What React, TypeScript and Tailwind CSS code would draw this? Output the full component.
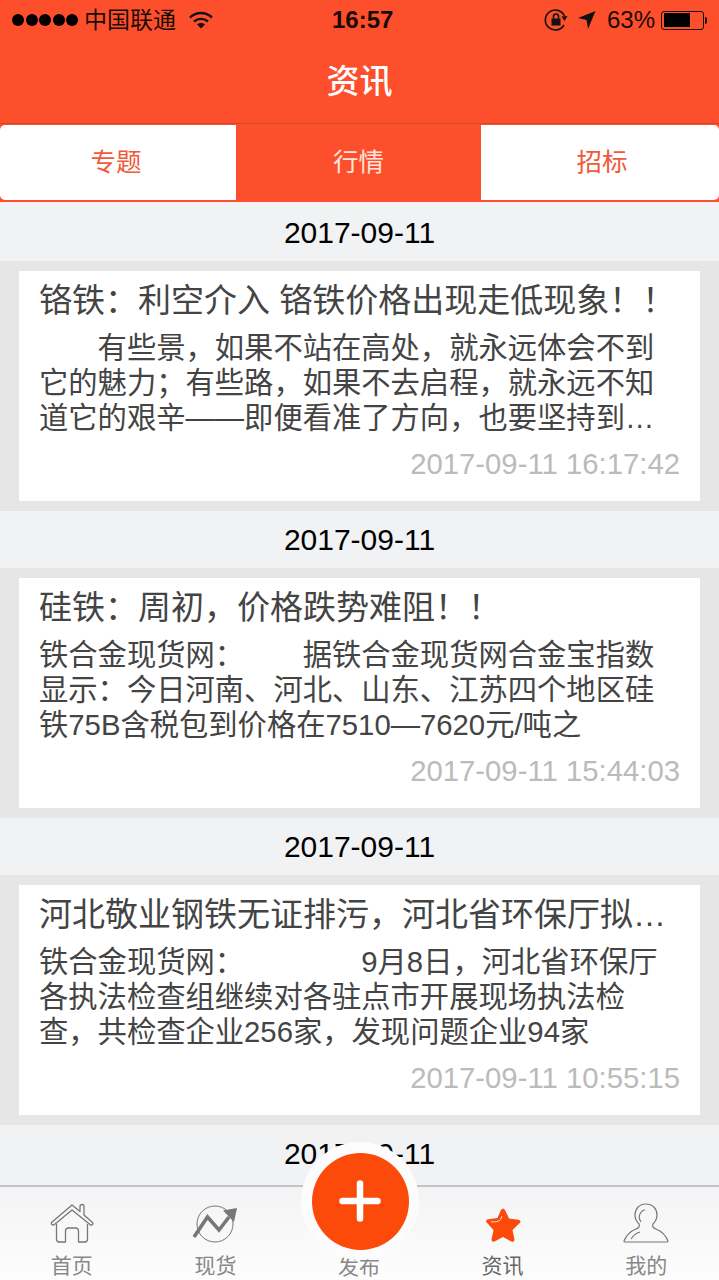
import React from 'react';
import { Plus } from 'lucide-react';

const articles = [
  {
    title: '铬铁：利空介入 铬铁价格出现走低现象！！',
    lines: ['\u2003\u2003有些景，如果不站在高处，就永远体会不到', '它的魅力；有些路，如果不去启程，就永远不知', '道它的艰辛——即便看准了方向，也要坚持到…'],
    time: '2017-09-11 16:17:42',
  },
  {
    title: '硅铁：周初，价格跌势难阻！！',
    lines: ['铁合金现货网：\u2003\u2003据铁合金现货网合金宝指数', '显示：今日河南、河北、山东、江苏四个地区硅', '铁75B含税包到价格在7510—7620元/吨之'],
    time: '2017-09-11 15:44:03',
  },
  {
    title: '河北敬业钢铁无证排污，河北省环保厅拟…',
    lines: ['铁合金现货网：\u2003\u2003\u2003\u20039月8日，河北省环保厅', '各执法检查组继续对各驻点市开展现场执法检', '查，共检查企业256家，发现问题企业94家'],
    time: '2017-09-11 10:55:15',
  },
];

const HomeIcon = () => (
  <svg width="44" height="40" viewBox="0 0 44 40" fill="none" stroke="#777" strokeWidth="1.3" strokeLinejoin="round">
    <path d="M1.5 19.5 22 2l8 6.5V3.5q0-2 2-2t2 2V12l8.500 7.500q1 1.500-.5 2.500-1 .5-2-.5L22 7 4.500 21.500q-1.500 1-2.500 0-1-1-.5-2z" />
    <path d="M6.500 21v15q0 3 2.500 3h6.500V28q0-3 3-3h7q3 0 3 3v11H35q2.500 0 2.500-3V21" />
  </svg>
);

const ChartIcon = () => (
  <svg width="46" height="38" viewBox="0 0 46 38" fill="none" stroke="#777">
    <circle cx="23" cy="19" r="18" strokeWidth="1" />
    <path d="M2 32 15.500 12 27 25l10-13" strokeWidth="3.600" strokeLinejoin="miter" />
    <path d="M31 5.500 45 3l-3 14z" fill="#777" stroke="none" />
  </svg>
);

const StarIcon = () => (
  <svg width="38" height="36" viewBox="0 0 38 36">
    <path d="M19 1.500q1.500 0 2.500 2.500l3.500 7.500 9.500 1.200q3 .8 1.500 3L28.500 23l2 9.500q0 3-3 2L19 30l-8.500 4.500q-3 1-3-2l2-9.500-7-7.800q-1.500-2.200 1.500-3l9.500-1.200L16.500 4q1-2.500 2.500-2.500z" fill="#fb4a0a" />
    <path d="M7 15q5 0 8-1 2-1 3-5" fill="none" stroke="#ffd9c8" strokeWidth="1" />
  </svg>
);

const UserIcon = () => (
  <svg width="46" height="40" viewBox="0 0 46 40" fill="none" stroke="#777" strokeWidth="1.2">
    <path d="M23 1c-7 0-11 5-11 11 0 4 2 7 4 9 1 2 0 4-3 5-5 2-10 7-12 12q0 1 1 1h42q1 0 1-1c-2-5-7-10-12-12-3-1-4-3-3-5 2-2 4-5 4-9 0-6-4-11-11-11z" />
    <path d="M18 19c-2-3-2-6-1-8s3-4 5-4M8 36c2-3 5-6 9-7" />
  </svg>
);

const StatusBar = () => (
  <div className="relative flex h-[40px] items-center justify-between px-[12px] text-[24px] text-[#1a0a05]">
    <div className="flex items-center">
      <div className="flex gap-[1.500px]">
        {[0, 1, 2, 3, 4].map((i) => (
          <span key={i} className="h-[12px] w-[12px] rounded-full bg-black" />
        ))}
      </div>
      <span className="ml-[6px] text-[23px] leading-none">中国联通</span>
      <svg className="ml-[13px]" width="24" height="18" viewBox="0 0 24 18" fill="none" stroke="#111" strokeWidth="2.400">
        <path d="M1 6.500c6.500-6 15.500-6 22 0M5 10.500c4-3.500 10-3.500 14 0" />
        <path d="M12 17.500 8 13.500c2-2 6-2 8 0z" fill="#111" stroke="none" />
      </svg>
    </div>
    <span className="absolute left-[332px] top-[4px] text-[24px] font-bold leading-[32px]">16:57</span>
    <div className="flex items-center">
      <svg width="24" height="24" viewBox="0 0 24 24" fill="none" stroke="#111" strokeWidth="1.600">
        <path d="M20 17a10 10 0 1 1 .5-9" />
        <path d="m17.500 8.500 6-.5-3 5z" fill="#111" stroke="none" />
        <rect x="7.500" y="10.500" width="9" height="7" fill="#111" stroke="none" />
        <path d="M9.500 10.500V8.500a2.500 2.500 0 0 1 5 0v2" />
      </svg>
      <svg className="ml-[10px]" width="18" height="20" viewBox="0 0 18 20">
        <path d="M17.500 1 10 19l-1.500-9L0 8z" fill="#111" />
      </svg>
      <span className="ml-[11px] leading-none">63%</span>
      <div className="ml-[6px] flex h-[19px] w-[43px] items-center rounded-[3px] border border-[#1a0a05] p-[1.500px]">
        <div className="h-full w-[26px] bg-black" />
      </div>
      <div className="ml-[1px] h-[7px] w-[2px] rounded-r-[2px] bg-[#1a0a05]" />
    </div>
  </div>
);

const Tabs = () => (
  <div className="flex h-[79px] border-b-2 border-t border-b-[#fe4f2c] border-t-[#c9492c] bg-[#fe4f2c] pt-[1px] text-[25.500px] leading-none">
    <div className="flex w-[236px] items-center justify-center rounded-l-[5px] bg-white pr-[4px] text-[#f0593a]">专题</div>
    <div className="flex w-[245px] items-center justify-center text-[#ffe5dd]">行情</div>
    <div className="flex flex-1 items-center justify-center rounded-r-[5px] bg-white pl-[4px] text-[#f0593a]">招标</div>
  </div>
);

const ArticleCard = ({ title, lines, time }: { title: string; lines: string[]; time: string }) => (
  <div className="bg-[#e6e6e6] px-[19px] py-[10px]">
    <div className="flex h-[230px] flex-col bg-white px-[20px] pb-[20px] pt-[10px] text-[#444]">
      <div className="whitespace-pre text-[33px] leading-[40px]">{title}</div>
      <div className="mt-[9px] text-[29.300px] leading-[35px]">
        {lines.map((line, index) => (
          <div key={index} className="whitespace-pre">{line}</div>
        ))}
      </div>
      <div className="mt-auto text-right text-[29.300px] leading-[34px] text-[#bbbbbb]">{time}</div>
    </div>
  </div>
);

const DateRow = () => (
  <div className="flex h-[57px] items-center justify-center bg-[#f1f2f4] text-[30px] text-black">2017-09-11</div>
);

const TabItem = ({ icon, label, dark }: { icon: React.ReactNode; label: string; dark?: boolean }) => (
  <div className="flex flex-1 flex-col items-center">
    <div className="flex h-[57px] items-end pb-[1px]">{icon}</div>
    <span className={`mt-[9px] text-[21px] leading-[26px] ${dark ? 'text-[#666]' : 'text-[#888]'}`}>{label}</span>
  </div>
);

export default function App() {
  return (
    <div
      className="relative flex h-[1280px] w-[719px] flex-col overflow-hidden bg-[#f1f2f4]"
      style={{ fontFamily: '"Liberation Sans", "Noto Sans CJK SC", sans-serif' }}
    >
      <header className="bg-[#fe4f2c]">
        <StatusBar />
        <div className="flex h-[83px] items-center justify-center text-[33px] font-medium text-white">资讯</div>
      </header>
      <Tabs />

      <main className="min-h-0 flex-1 overflow-hidden pt-[2px]">
        {articles.map((article, index) => (
          <div key={index}>
            <DateRow />
            <ArticleCard {...article} />
          </div>
        ))}
        <DateRow />
      </main>

      <nav className="flex h-[95px] border-t-2 border-[#c4c4c4] bg-gradient-to-b from-[#f4f4f6] to-[#fdfdfd] pr-[1px]">
        <TabItem icon={<HomeIcon />} label="首页" />
        <TabItem icon={<ChartIcon />} label="现货" />
        <div className="flex flex-1 flex-col items-center justify-end">
          <span className="text-[21px] leading-[26px] text-[#888]">发布</span>
        </div>
        <TabItem icon={<StarIcon />} label="资讯" dark />
        <TabItem icon={<UserIcon />} label="我的" />
      </nav>

      <div className="absolute left-[301px] top-[1142px] flex h-[118px] w-[118px] items-center justify-center rounded-full bg-[#fcfcfd]">
        <div className="flex h-[97px] w-[97px] items-center justify-center rounded-full bg-[#fb4a0a]">
          <Plus size={60} color="#fff" strokeWidth={2.600} />
        </div>
      </div>
    </div>
  );
}
